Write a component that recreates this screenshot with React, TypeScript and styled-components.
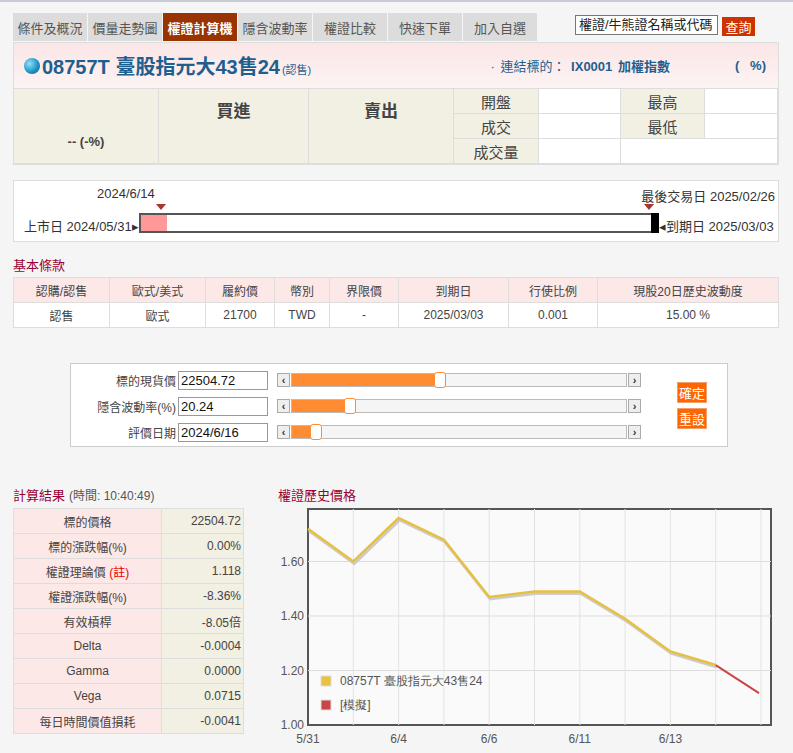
import React from "react";
import styled, { createGlobalStyle } from "styled-components";

const G = createGlobalStyle`
  body{margin:0;background:#f5f5f5;font-family:"Liberation Sans","Noto Sans CJK TC",sans-serif;font-size:13px;color:#333;}
`;
const Page = styled.div`width:793px;height:753px;overflow:hidden;border-top:2px solid #c8ccd4;box-sizing:border-box;padding:11px 14px 0 13px;`;
const TopRow = styled.div`display:flex;align-items:flex-start;height:29px;`;
const Tabs = styled.div`display:flex;gap:1px;`;
const Tab = styled.div<{ $a?: boolean }>`width:74px;height:28px;display:flex;align-items:center;justify-content:center;font-size:13px;
  background:${p => p.$a ? "#993300" : "#dcdcdc"};color:${p => p.$a ? "#fff" : "#555"};font-weight:${p => p.$a ? "bold" : "normal"};`;
const Search = styled.div`margin-left:38px;margin-top:2px;display:flex;gap:4px;`;
const SInput = styled.div`width:138px;height:18px;border:1px solid #777;background:#fff;font-size:13px;line-height:18px;padding-left:3px;overflow:hidden;white-space:nowrap;color:#222;`;
const SBtn = styled.div`width:33px;height:19px;background:#cc3300;color:#fff;font-size:13px;display:flex;align-items:center;justify-content:center;margin-top:2px;`;
const Header = styled.div`height:45px;border:1px solid #ddd;background:linear-gradient(#fbe6e6,#fdf3f3);display:flex;align-items:center;padding:0 12px 0 10px;`;
const Ball = styled.span`width:16px;height:16px;border-radius:50%;background:radial-gradient(circle at 35% 35%,#8fe3f5,#1a8fc0 60%,#0a5d8c);margin-right:2px;`;
const Title = styled.span`font-size:20px;font-weight:bold;color:#1f5f90;`;
const Small = styled.span`font-size:11px;color:#1f5f90;margin-left:2px;margin-top:6px;`;
const Link = styled.span`margin-left:auto;color:#1f5f90;font-size:13px;word-spacing:2px;`;
const Pct = styled.span`margin-left:65px;color:#1f5f90;font-weight:bold;font-size:13px;`;
const Quote = styled.div`display:grid;grid-template-columns:145px 150px 145px 85px 82px 84px 1fr;grid-template-rows:25px 25px 25px;border:1px solid #ddd;border-top:none;background:#fff;`;
const QC = styled.div<{ $bg?: string; $big?: boolean; $span?: number; $end?: boolean }>`border-right:1px solid #ddd;border-bottom:1px solid #ddd;
  background:${p => p.$bg || "#fff"};display:flex;align-items:${p => p.$end ? "flex-end" : "center"};justify-content:center;
  font-size:${p => p.$big ? "17px" : "15px"};font-weight:${p => p.$big ? "bold" : "normal"};color:#444;
  ${p => p.$span ? `grid-row:span ${p.$span};` : ""}`;
const TL = styled.div`margin-top:15px;height:60px;border:1px solid #ddd;background:#fff;position:relative;font-size:13px;color:#333;`;
const Lab = styled.span`position:absolute;`;
const Bar = styled.div`position:absolute;left:125px;top:32px;width:516px;height:20px;border:2px solid #555;box-sizing:border-box;background:#fff;`;
const Fill = styled.div`width:26px;height:100%;background:#ff9999;`;
const Tri = styled.span`position:absolute;width:0;height:0;border-left:5px solid transparent;border-right:5px solid transparent;border-top:6px solid #a33;top:23px;`;
const SecT = styled.div`color:#990033;font-size:13px;margin:13px 0 3px;`;
const Terms = styled.table`width:766px;border-collapse:collapse;background:#fff;font-size:12px;color:#444;
  td,th{border:1px solid #ddd;height:24px;text-align:center;font-weight:normal;padding:0;}
  th{background:#fde8e8;}`;
const Sliders = styled.div`margin:35px 0 0 57px;width:658px;height:84px;border:1px solid #ccc;background:#fff;display:flex;padding:6px 0 0 0;box-sizing:border-box;`;
const SRows = styled.div`display:flex;flex-direction:column;gap:6px;`;
const SRow = styled.div`display:flex;align-items:center;height:20px;`;
const SLab = styled.div`width:105px;text-align:right;font-size:12px;color:#444;padding-right:2px;`;
const SIn = styled.div`width:86px;height:17px;border:1px solid #999;font-size:13px;line-height:17px;padding-left:2px;color:#111;`;
const Track = styled.div`margin-left:9px;display:flex;align-items:center;width:364px;height:14px;`;
const Arr = styled.div`width:11px;height:12px;border:1px solid #aaa;background:#eee;font-size:11px;font-weight:bold;display:flex;align-items:center;justify-content:center;color:#333;`;
const Rail = styled.div`flex:1;height:12px;border:1px solid #bbb;background:#f5f5f5;position:relative;margin:0 1px;`;
const RFill = styled.div`height:100%;background:#ff8c33;`;
const Knob = styled.div`position:absolute;top:-2px;width:10px;height:14px;border:1px solid #ff8c33;border-radius:3px;background:#fff;`;
const Btns = styled.div`margin-left:36px;margin-top:12px;display:flex;flex-direction:column;gap:5px;`;
const OB = styled.div`width:28px;height:19px;background:#ff6600;color:#fff;font-size:13px;display:flex;align-items:center;justify-content:center;border:1px solid #f0a070;`;
const Bottom = styled.div`display:flex;margin-top:38px;`;
const Left = styled.div`width:230px;`;
const Time = styled.span`color:#555;font-size:12px;margin-left:4px;`;
const RT = styled.table`width:231px;border-collapse:collapse;font-size:12px;color:#444;
  td{border:1px solid #ddd;height:24px;padding:0;}
  td:first-child{background:#fde8e8;text-align:center;width:147px;}
  td:last-child{background:#f2efe3;text-align:right;padding-right:2px;}`;
const Red = styled.span`color:#e00;`;
const Right = styled.div`margin-left:35px;`;

const pts: [number, number][] = [[1.72, 0], [1.6, 1], [1.76, 2], [1.68, 3], [1.47, 4], [1.49, 5], [1.49, 6], [1.39, 7], [1.27, 8], [1.22, 9]];
const X = (i: number) => 30 + i * 45.3;
const Y = (v: number) => 218 - (v - 1) * 272.5;

function Chart() {
  const poly = pts.map(([v, i]) => `${X(i)},${Y(v)}`).join(" ");
  return (
    <svg width="500" height="240" style={{ display: "block", marginTop: 3 }} fontFamily="Liberation Sans" fontSize="12">
      <rect x="30" y="2" width="463" height="216" fill="#fafafa" stroke="#555" strokeWidth="2" />
      {[1.2, 1.4, 1.6].map(v => <line key={v} x1="30" x2="493" y1={Y(v)} y2={Y(v)} stroke="#ddd" />)}
      {[1, 2, 3, 4, 5, 6, 7, 8, 9, 10].map(i => <line key={i} x1={X(i)} x2={X(i)} y1="2" y2="218" stroke="#e3e3e3" />)}
      {[1.0, 1.2, 1.4, 1.6].map(v => <text key={v} x="26" y={Y(v) + 4} textAnchor="end" fill="#555">{v.toFixed(2)}</text>)}
      {["5/31", "6/4", "6/6", "6/11", "6/13"].map((t, k) => <text key={t} x={X(k * 2)} y="236" textAnchor="middle" fill="#555">{t}</text>)}
      <polyline points={poly} fill="none" stroke="#ccc" strokeWidth="3" transform="translate(1,2)" />
      <polyline points={poly} fill="none" stroke="#e8c040" strokeWidth="2.5" />
      <line x1={X(9)} y1={Y(1.22)} x2={X(10) - 2} y2={Y(1.117)} stroke="#cc4444" strokeWidth="2" />
      <rect x="43" y="169" width="10" height="10" fill="#ecc040" stroke="#ddd" />
      <text x="62" y="178" fill="#555">08757T 臺股指元大43售24</text>
      <rect x="43" y="193" width="10" height="10" fill="#cc4444" stroke="#ddd" />
      <text x="62" y="202" fill="#555">[模擬]</text>
    </svg>
  );
}

const sl = [["標的現貨價", "22504.72", 44], ["隱含波動率(%)", "20.24", 17], ["評價日期", "2024/6/16", 7]] as const;

export default function App() {
  return (
    <Page>
      <G />
      <TopRow>
        <Tabs>
          {["條件及概況", "價量走勢圖", "權證計算機", "隱含波動率", "權證比較", "快速下單", "加入自選"].map((t, i) => <Tab key={t} $a={i === 2}>{t}</Tab>)}
        </Tabs>
        <Search><SInput>權證/牛熊證名稱或代碼</SInput><SBtn>查詢</SBtn></Search>
      </TopRow>
      <Header>
        <Ball /><Title>08757T 臺股指元大43售24</Title><Small>(認售)</Small>
        <Link>· 連結標的： <b>IX0001 加權指數</b></Link><Pct>( &nbsp;&nbsp;%)</Pct>
      </Header>
      <Quote>
        <QC $bg="#f2efe3" $span={3} $big $end style={{ paddingBottom: 14, fontSize: 13 }}>-- (-%)</QC>
        <QC $bg="#f2efe3" $span={3} $big style={{ alignItems: "flex-start", paddingTop: 8 }}>買進</QC>
        <QC $bg="#f2efe3" $span={3} $big style={{ alignItems: "flex-start", paddingTop: 8 }}>賣出</QC>
        <QC $bg="#f2efe3">開盤</QC><QC /><QC $bg="#f2efe3">最高</QC><QC />
        <QC $bg="#f2efe3">成交</QC><QC /><QC $bg="#f2efe3">最低</QC><QC />
        <QC $bg="#f2efe3">成交量</QC><QC /><QC style={{ gridColumn: "span 2" }} />
      </Quote>
      <TL>
        <Lab style={{ left: 83, top: 5 }}>2024/6/14</Lab>
        <Lab style={{ right: 3, top: 5 }}>最後交易日 2025/02/26</Lab>
        <Lab style={{ left: 10, top: 35 }}>上市日 2024/05/31▸</Lab>
        <Tri style={{ left: 142 }} /><Tri style={{ left: 630 }} />
        <Bar><Fill /></Bar>
        <Lab style={{ left: 637, top: 32, width: 8, height: 20, background: "#000" }} />
        <Lab style={{ left: 645, top: 35 }}>◂到期日 2025/03/03</Lab>
      </TL>
      <SecT>基本條款</SecT>
      <Terms>
        <thead><tr>{["認購/認售", "歐式/美式", "履約價", "幣別", "界限價", "到期日", "行使比例", "現股20日歷史波動度"].map((h, i) =>
          <th key={h} style={{ width: [95, 95, 68, 54, 68, 109, 88, 0][i] || undefined }}>{h}</th>)}</tr></thead>
        <tbody><tr>{["認售", "歐式", "21700", "TWD", "-", "2025/03/03", "0.001", "15.00 %"].map((c, i) => <td key={i}>{c}</td>)}</tr></tbody>
      </Terms>
      <Sliders>
        <SRows>
          {sl.map(([l, v, p]) => (
            <SRow key={l}><SLab>{l}</SLab><SIn>{v}</SIn>
              <Track><Arr>‹</Arr><Rail><RFill style={{ width: `${p}%` }} /><Knob style={{ left: `calc(${p}% - 5px)` }} /></Rail><Arr>›</Arr></Track>
            </SRow>
          ))}
        </SRows>
        <Btns><OB>確定</OB><OB>重設</OB></Btns>
      </Sliders>
      <Bottom>
        <Left>
          <SecT style={{ margin: "0 0 4px" }}>計算結果<Time>(時間: 10:40:49)</Time></SecT>
          <RT><tbody>
            {[["標的價格", "22504.72"], ["標的漲跌幅(%)", "0.00%"], ["權證理論價", "1.118"], ["權證漲跌幅(%)", "-8.36%"], ["有效槓桿", "-8.05倍"], ["Delta", "-0.0004"], ["Gamma", "0.0000"], ["Vega", "0.0715"], ["每日時間價值損耗", "-0.0041"]].map(([a, b], i) =>
              <tr key={a}><td>{a}{i === 2 && <Red> (註)</Red>}</td><td>{b}</td></tr>)}
          </tbody></RT>
        </Left>
        <Right>
          <SecT style={{ margin: 0 }}>權證歷史價格</SecT>
          <Chart />
        </Right>
      </Bottom>
    </Page>
  );
}
